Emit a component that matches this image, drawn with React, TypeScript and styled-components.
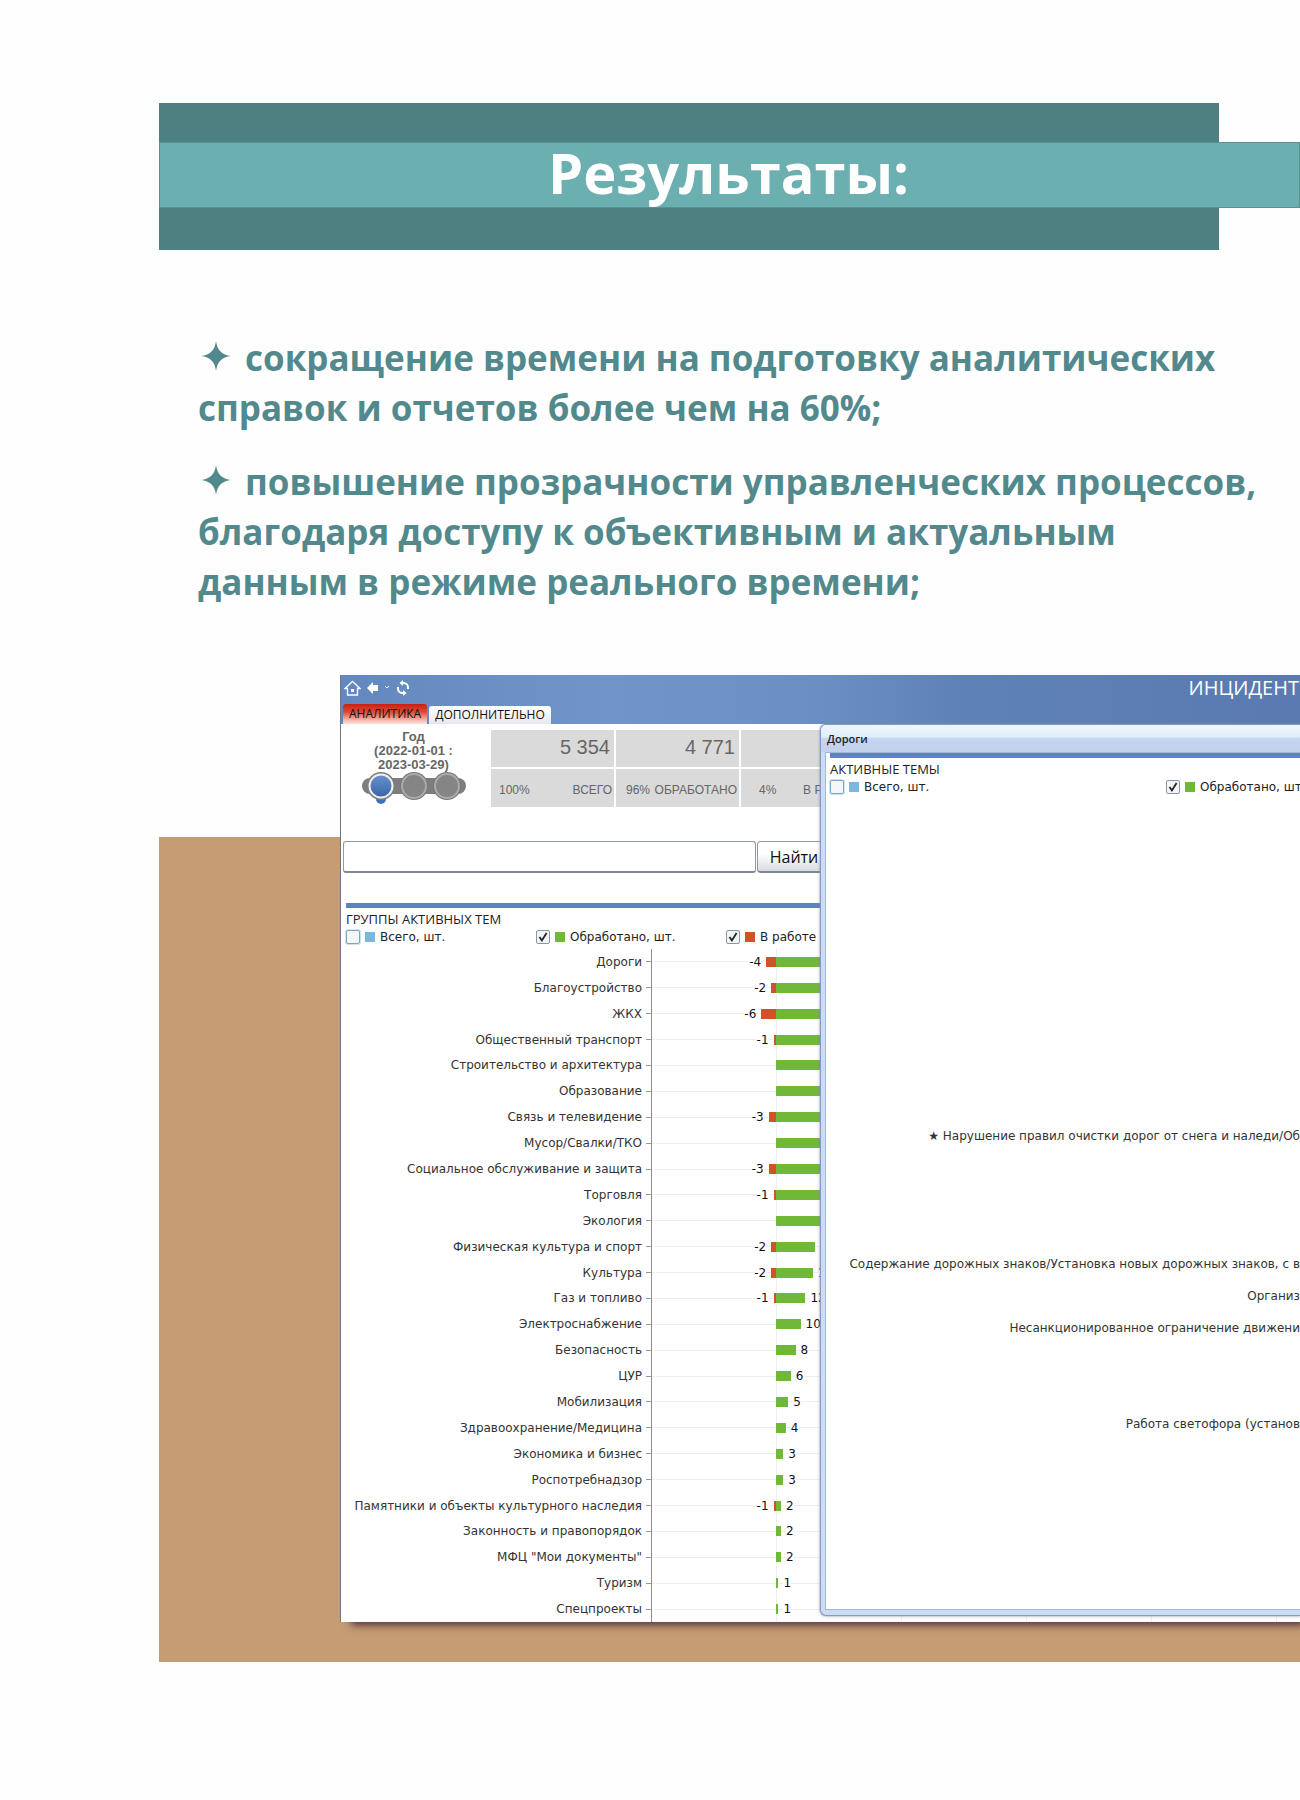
import React from 'react';
import styled, { createGlobalStyle } from 'styled-components';

const GlobalStyle = createGlobalStyle`
  *, *::before, *::after { box-sizing: border-box; }
  body { margin: 0; background: #fefefe; }
`;

const sans = '"Open Sans", "Noto Sans", sans-serif';
const wide = '"DejaVu Sans", Verdana, sans-serif';
const arial = '"Liberation Sans", Arial, sans-serif';

const UNIT = 2.45;

const Page = styled.main`
  padding: 103px 0 138px 159px;
  overflow: hidden;
  font-family: ${sans};
`;

const Banner = styled.header`
  padding: 39px 0 42px;
  background: linear-gradient(#4e8082, #4e8082) no-repeat left top / calc(100% - 81px) 100%;
`;

const Title = styled.h1`
  margin: 0;
  height: 66px;
  padding-right: 2px;
  border: 1px solid #559294;
  background: #6cafb1;
  color: #fff;
  font-size: 56px;
  font-weight: 700;
  line-height: 58px;
  text-align: center;
`;

const Results = styled.ul`
  margin: 0;
  padding: 83px 20px 0 39px;
  list-style: none;
  color: #52898d;
  font-size: 35px;
  font-weight: 700;
  line-height: 50px;
`;

const Result = styled.li`
  margin-bottom: 24px;
`;

const Spark = styled.svg`
  width: 30px;
  height: 30px;
  margin: 0 14px 0 3px;
  fill: currentColor;
`;

const Stage = styled.section`
  margin-top: 68px;
  padding: 0 0 40px 181px;
  background: linear-gradient(transparent 162px, #c69c75 162px);
`;

const Screen = styled.div`
  position: relative;
  border-left: 1px solid #71757c;
  background: #fff;
  box-shadow: 8px 6px 8px -3px #4b2f35;
`;

const TopBar = styled.div`
  display: flex;
  flex-direction: column;
  justify-content: space-between;
  height: 49px;
  background: linear-gradient(90deg, #6388bf 0%, #7096c8 28%, #6a8fc3 50%, #5e82b8 65%, #5a7ab0 100%);
`;

const TopRow = styled.div`
  display: flex;
  align-items: center;
  justify-content: space-between;
  height: 25px;
  padding: 0 1px 0 3px;
`;

const NavButtons = styled.nav`
  display: flex;
  align-items: center;
  gap: 6px;
`;

const IconButton = styled.button`
  display: flex;
  padding: 0;
  border: 0;
  background: none;
  color: #fff;
`;

const AppName = styled.span`
  color: #fff;
  font-size: 20px;
  line-height: 24px;
`;

const Tabs = styled.div`
  display: flex;
  align-items: flex-end;
  gap: 2px;
  padding-left: 2px;
`;

const Tab = styled.button<{ $active?: boolean }>`
  height: ${p => (p.$active ? 20 : 18)}px;
  padding: 0 6px;
  border: 0;
  border-radius: 3px 3px 0 0;
  background: ${p =>
    p.$active
      ? 'linear-gradient(#c8200f, #dc4a38 40%, #f6b5aa 80%, #fbe3df)'
      : 'linear-gradient(#fff, #e6e8ec)'};
  color: #111;
  font-family: ${sans};
  font-size: 12px;
  line-height: 18px;
`;

const Summary = styled.div`
  display: flex;
  gap: 22px;
  height: 83px;
  padding: 6px 0 0 17px;
`;

const Period = styled.div`
  width: 111px;
  color: #666;
  font: bold 13px/14px ${arial};
  text-align: center;
`;

const PeriodSlider = styled.svg`
  display: block;
  width: 106px;
  height: 34px;
  margin: -1px auto 0;
`;

const Stats = styled.div`
  display: grid;
  grid-template-columns: repeat(3, 123px);
  grid-template-rows: 37px 38px;
  gap: 2px;
  color: #666;
  font-family: ${arial};
`;

const Count = styled.div`
  padding: 0 4px;
  background: #dadada;
  font-size: 20px;
  line-height: 34px;
  text-align: right;
`;

const Share = styled.div`
  display: flex;
  justify-content: space-between;
  padding: 0 2px 0 ${(p: { $indent: number }) => p.$indent}px;
  background: #dadada;
  font-size: 12px;
  line-height: 42px;
`;

const Search = styled.form`
  display: flex;
  gap: 1px;
  margin: 34px 0 0 2px;
`;

const SearchInput = styled.input`
  width: 413px;
  height: 32px;
  padding: 0 8px;
  border: 1px solid #8f98a5;
  border-bottom: 2px solid #7d8896;
  border-radius: 3px;
  font: 15px ${sans};
`;

const SearchButton = styled.button`
  width: 74px;
  height: 32px;
  border: 1px solid #8f98a5;
  border-bottom: 2px solid #7d8896;
  border-radius: 4px;
  background: linear-gradient(#fff 40%, #d9dce0);
  color: #111;
  font: 16px ${sans};
`;

const Rule = styled.hr<{ $wide?: boolean }>`
  height: 5px;
  margin: 0;
  border: 0;
  background: #5c83bd;
`;

const Groups = styled.section`
  padding: 30px 0 0 5px;
`;

const PanelTitle = styled.h2`
  margin: 0;
  color: #222;
  font: 13px/22px ${sans};
`;

const Legend = styled.div<{ $column: number }>`
  display: grid;
  grid-template-columns: repeat(3, ${p => p.$column}px);
  height: 19px;
  color: #222;
  font: 12px/14px ${wide};
`;

const LegendItem = styled.label`
  display: flex;
  align-items: center;
  gap: 5px;
  height: 14px;
  white-space: nowrap;
`;

const Check = styled.input`
  appearance: none;
  width: 14px;
  height: 14px;
  margin: 0;
  border: 1px solid #8796a8;
  border-radius: 2px;
  background: #f4f6f8;
  &:not(:checked) { border-color: #7ba6c4; box-shadow: 0 0 0 1px #cfe3ee; }
  &:checked {
    background: #f1f3f5 url("data:image/svg+xml,%3Csvg xmlns='http://www.w3.org/2000/svg' viewBox='0 0 12 12'%3E%3Cpath d='M2.5 6l2.4 3.4L9.6 2' fill='none' stroke='%23222' stroke-width='1.8'/%3E%3C/svg%3E") center / 12px;
  }
`;

const Swatch = styled.span<{ $color: string }>`
  width: 10px;
  height: 10px;
  background: ${p => p.$color};
`;

const Chart = styled.div`
  display: grid;
  grid-auto-rows: 1fr;
  height: 673px;
  font: 12px/14px ${wide};
`;

const ChartRow = styled.div`
  display: grid;
  grid-template-columns: 305px 125px 1fr;
  align-items: center;
`;

const RowLabel = styled.span`
  display: flex;
  align-items: center;
  justify-content: flex-end;
  gap: 4px;
  color: #333;
  white-space: nowrap;
  &::after { content: ''; width: 5px; height: 1px; background: #999; }
`;

const Side = styled.span<{ $negative?: boolean }>`
  display: flex;
  align-items: center;
  align-self: stretch;
  justify-content: ${p => (p.$negative ? 'flex-end' : 'flex-start')};
  gap: 5px;
  border-left: ${p => (p.$negative ? '1px solid #8c8c8c' : '0')};
  color: #111;
  background:
    linear-gradient(#eee, #eee) no-repeat center / 100% 1px,
    ${p =>
      p.$negative
        ? 'none'
        : 'repeating-linear-gradient(90deg, #eee 0 1px, transparent 1px 125px)'};
`;

const Value = styled.span`
  background: #fff;
`;

const Bar = styled.span<{ $color: string }>`
  height: 10px;
  background: ${p => p.$color};
`;

const Dialog = styled.section`
  position: absolute;
  top: 49px;
  right: 0;
  bottom: 6px;
  left: 479px;
  display: flex;
  flex-direction: column;
  border: 1px solid #8499c4;
  border-right: 0;
  border-radius: 6px 0 0 6px;
  background: #cddcf5;
  box-shadow: 0 0 3px #888;
  overflow: hidden;
`;

const DialogTitle = styled.h2`
  height: 27px;
  margin: 0;
  padding-left: 6px;
  background: linear-gradient(#f0f7fd, #dfedfa 45%, #c7d5ef 50%, #c2d1ed);
  color: #222;
  font: 600 11px/27px ${sans};
`;

const DialogBody = styled.div`
  flex: 1;
  margin: 0 0 5px 4px;
  padding-left: 4px;
  border: solid #a3b6dc;
  border-width: 1px 0 1px 1px;
  background: #fff;
  overflow: hidden;
`;

const Topics = styled.ul`
  display: grid;
  grid-auto-rows: 32px;
  align-items: center;
  margin: 0;
  padding: 0;
  list-style: none;
  color: #333;
  font: 12px/14px ${wide};
`;

const Topic = styled.li`
  min-height: 14px;
  text-align: right;
  white-space: nowrap;
`;

const BLUE = '#7ab8e0';
const GREEN = '#70b838';
const RED = '#d05228';

const groups: [string, number, number][] = [
  ['Дороги', 4, 60],
  ['Благоустройство', 2, 52],
  ['ЖКХ', 6, 48],
  ['Общественный транспорт', 1, 40],
  ['Строительство и архитектура', 0, 36],
  ['Образование', 0, 32],
  ['Связь и телевидение', 3, 30],
  ['Мусор/Свалки/ТКО', 0, 28],
  ['Социальное обслуживание и защита', 3, 26],
  ['Торговля', 1, 24],
  ['Экология', 0, 20],
  ['Физическая культура и спорт', 2, 16],
  ['Культура', 2, 15],
  ['Газ и топливо', 1, 12],
  ['Электроснабжение', 0, 10],
  ['Безопасность', 0, 8],
  ['ЦУР', 0, 6],
  ['Мобилизация', 0, 5],
  ['Здравоохранение/Медицина', 0, 4],
  ['Экономика и бизнес', 0, 3],
  ['Роспотребнадзор', 0, 3],
  ['Памятники и объекты культурного наследия', 1, 2],
  ['Законность и правопорядок', 0, 2],
  ['МФЦ "Мои документы"', 0, 2],
  ['Туризм', 0, 1],
  ['Спецпроекты', 0, 1],
];

const topics = [
  '★ Нарушение правил очистки дорог от снега и наледи/Об',
  '',
  '',
  '',
  'Содержание дорожных знаков/Установка новых дорожных знаков, с в',
  'Организ',
  'Несанкционированное ограничение движени',
  '',
  '',
  'Работа светофора (установ',
];

const TopicArea = styled.div`
  padding-top: 321px;
`;

function LegendEntry({ color, text, checked }: { color: string; text: string; checked?: boolean }) {
  return (
    <LegendItem>
      <Check type="checkbox" defaultChecked={checked} />
      <Swatch $color={color} />
      {text}
    </LegendItem>
  );
}

function Star() {
  return (
    <Spark viewBox="0 0 30 30" aria-hidden="true">
      <path d="M15 0C16 9 21 14 30 15C21 16 16 21 15 30C14 21 9 16 0 15C9 14 14 9 15 0Z" />
    </Spark>
  );
}

function Navigation() {
  return (
    <NavButtons>
      <IconButton aria-label="Домой">
        <svg width="17" height="16" viewBox="0 0 17 16" fill="none" stroke="currentColor" strokeWidth="1.3">
          <path d="M1 8.5L8.5 1.5L16 8.5H13.5V15H3.500V8.500Z" />
          <path d="M8.500 9V12" strokeWidth="3" />
        </svg>
      </IconButton>
      <IconButton aria-label="Назад">
        <svg width="11" height="12" viewBox="0 0 11 12" fill="currentColor">
          <path d="M0 6L6 0V3H11V9H6V12Z" />
        </svg>
      </IconButton>
      <IconButton aria-label="История">
        <svg width="6" height="5" viewBox="0 0 6 5" fill="none" stroke="currentColor">
          <path d="M1 1L3 3L5 1" />
        </svg>
      </IconButton>
      <IconButton aria-label="Обновить">
        <svg width="14" height="16" viewBox="0 0 14 16" fill="none" stroke="currentColor" strokeWidth="2">
          <path d="M6 3H7.500A4.500 4.500 0 0 1 12 7.500V9M8 13H6.500A4.500 4.500 0 0 1 2 8.500V7" />
          <path d="M7 0V6L3.500 3ZM7 10V16L10.500 13Z" fill="currentColor" stroke="none" />
        </svg>
      </IconButton>
    </NavButtons>
  );
}

function Steps() {
  return (
    <PeriodSlider viewBox="0 0 106 34" aria-hidden="true">
      <defs>
        <linearGradient id="stepBlue" x2="0" y2="1">
          <stop offset="0" stopColor="#6d94cf" />
          <stop offset="1" stopColor="#3462a8" />
        </linearGradient>
      </defs>
      <rect x="1" y="7" width="104" height="16" rx="8" fill="#7d7d7d" />
      <circle cx="20" cy="28" r="5" fill="#3f6fb5" />
      <circle cx="20" cy="15" r="13" fill="url(#stepBlue)" stroke="#7f7f7f" strokeWidth="2" />
      <circle cx="20" cy="15" r="11.500" fill="none" stroke="#f0f0f0" strokeWidth="2" />
      {[53, 86].map(cx => (
        <g key={cx}>
          <circle cx={cx} cy="15" r="14" fill="#777" />
          <circle cx={cx} cy="15" r="12" fill="#858585" stroke="#aaa" strokeWidth="2" />
        </g>
      ))}
    </PeriodSlider>
  );
}

export default function App() {
  return (
    <>
      <GlobalStyle />
      <Page>
        <Banner>
          <Title>Результаты:</Title>
        </Banner>
        <Results>
          <Result>
            <Star />
            сокращение времени на подготовку аналитических
            <br />
            справок и отчетов более чем на 60%;
          </Result>
          <Result>
            <Star />
            повышение прозрачности управленческих процессов,
            <br />
            благодаря доступу к объективным и актуальным
            <br />
            данным в режиме реального времени;
          </Result>
        </Results>
        <Stage>
          <Screen>
            <TopBar>
              <TopRow>
                <Navigation />
                <AppName>ИНЦИДЕНТ</AppName>
              </TopRow>
              <Tabs>
                <Tab $active>АНАЛИТИКА</Tab>
                <Tab>ДОПОЛНИТЕЛЬНО</Tab>
              </Tabs>
            </TopBar>
            <Summary>
              <Period>
                Год
                <br />
                (2022-01-01 :
                <br />
                2023-03-29)
                <Steps />
              </Period>
              <Stats>
                <Count>5 354</Count>
                <Count>4 771</Count>
                <Count />
                <Share $indent={8}>
                  <span>100%</span>
                  <span>ВСЕГО</span>
                </Share>
                <Share $indent={10}>
                  <span>96%</span>
                  <span>ОБРАБОТАНО</span>
                </Share>
                <Share $indent={18}>
                  <span>4%</span>
                  <span>В РАБОТЕ</span>
                </Share>
              </Stats>
            </Summary>
            <Search onSubmit={e => e.preventDefault()}>
              <SearchInput aria-label="Поиск" />
              <SearchButton>Найти</SearchButton>
            </Search>
            <Groups>
              <Rule />
              <PanelTitle>ГРУППЫ АКТИВНЫХ ТЕМ</PanelTitle>
              <Legend $column={190}>
                <LegendEntry color={BLUE} text="Всего, шт." />
                <LegendEntry color={GREEN} text="Обработано, шт." checked />
                <LegendEntry color={RED} text="В работе" checked />
              </Legend>
              <Chart>
                {groups.map(([name, open, done]) => (
                  <ChartRow key={name}>
                    <RowLabel>{name}</RowLabel>
                    <Side $negative>
                      {open > 0 && <Value>-{open}</Value>}
                      {open > 0 && <Bar $color={RED} style={{ width: open * UNIT }} />}
                    </Side>
                    <Side>
                      <Bar $color={GREEN} style={{ width: done * UNIT }} />
                      {done <= 16 && <Value>{done}</Value>}
                    </Side>
                  </ChartRow>
                ))}
              </Chart>
            </Groups>
            <Dialog aria-label="Дороги">
              <DialogTitle>Дороги</DialogTitle>
              <DialogBody>
                <Rule />
                <PanelTitle>АКТИВНЫЕ ТЕМЫ</PanelTitle>
                <Legend $column={336}>
                  <LegendEntry color={BLUE} text="Всего, шт." />
                  <LegendEntry color={GREEN} text="Обработано, шт." checked />
                </Legend>
                <TopicArea>
                  <Topics>
                    {topics.map((text, i) => (
                      <Topic key={i}>{text}</Topic>
                    ))}
                  </Topics>
                </TopicArea>
              </DialogBody>
            </Dialog>
          </Screen>
        </Stage>
      </Page>
    </>
  );
}
